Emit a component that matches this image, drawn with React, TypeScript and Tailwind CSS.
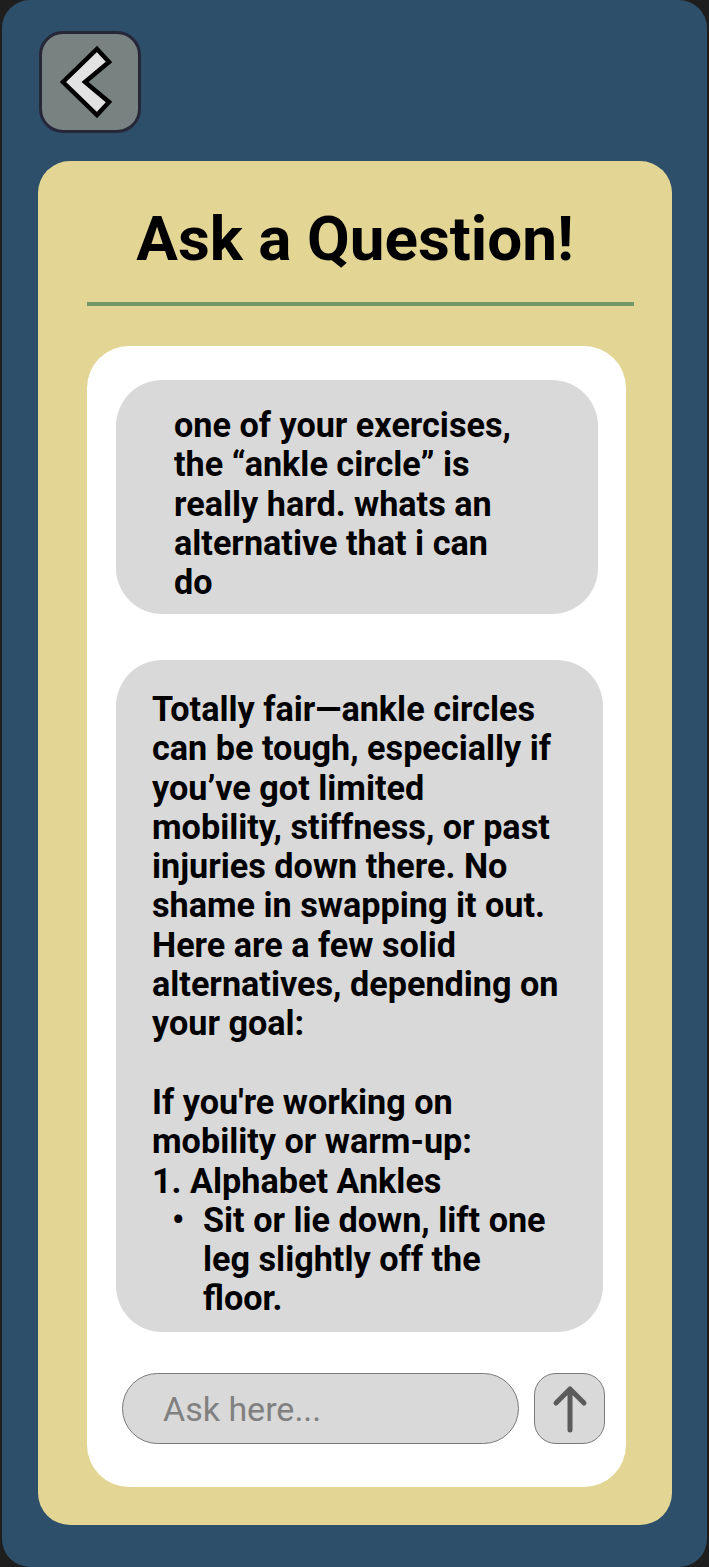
import React from 'react'

const font = { fontFamily: 'Roboto, "Liberation Sans", sans-serif' }

const BackChevron: React.FC = () => (
  <svg width="96" height="96" viewBox="0 0 96 96">
    <polygon
      points="55,15 67,28 43,48 67,68 55,81 21,48"
      fill="#e2e2e2"
      stroke="#000"
      strokeWidth="4.5"
      strokeLinejoin="miter"
    />
  </svg>
)

const UpArrow: React.FC = () => (
  <svg width="40" height="52" viewBox="0 0 40 52">
    <path d="M20 6 V47 M6 20 L20 6 L34 20" fill="none" stroke="#5b5b5b" strokeWidth="5" strokeLinecap="round" strokeLinejoin="round" />
  </svg>
)

const App: React.FC = () => {
  return (
    <div className="min-h-screen bg-[#1e1e1e] px-[2px]" style={font}>
      <div className="w-[705px] h-[1567px] rounded-[28px] bg-[#2d4f69] flex flex-col pt-[31px] pl-[36px]">
        {/* back button */}
        <button className="w-[102px] h-[102px] ml-[1px] rounded-[24px] border-[3px] border-[#27273a] bg-[#788381] flex items-center justify-center">
          <BackChevron />
        </button>

        {/* card */}
        <div className="mt-[28px] w-[634px] h-[1364px] rounded-[32px] bg-[#e3d694] flex flex-col pt-[42px]">
          <h1 className="text-center text-[62px] leading-[72px] font-bold text-black">Ask a Question!</h1>
          <div className="mt-[27px] ml-[49px] mr-[38px] h-[4px] bg-[#729866]" />

          {/* chat panel */}
          <div className="mt-[40px] ml-[49px] w-[539px] h-[1141px] rounded-[42px] bg-white flex flex-col pt-[34px]">
            <div className="ml-[29px] w-[482px] h-[234px] rounded-[46px] bg-[#d9d9d9] pt-[26px] pl-[58px]">
              <p className="w-[350px] text-[34.2px] leading-[39.3px] font-bold text-black">
                one of your exercises, the “ankle circle” is really hard. whats an alternative that i can do
              </p>
            </div>

            <div className="mt-[46px] ml-[29px] w-[487px] h-[672px] rounded-[46px] bg-[#d9d9d9] pt-[30px] pl-[36px] overflow-hidden">
              <div className="w-[408px] text-[34.2px] leading-[39.3px] font-bold text-black">
                <p>
                  Totally fair—ankle circles can be tough, especially if you’ve got limited mobility, stiffness, or past
                  injuries down there. No shame in swapping it out. Here are a few solid alternatives, depending on your goal:
                </p>
                <p className="mt-[39.3px]">If you're working on mobility or warm-up:</p>
                <p>1. Alphabet Ankles</p>
                <div className="flex">
                  <span className="w-[51px] shrink-0 pl-[20px]">•</span>
                  <span className="w-[350px]">Sit or lie down, lift one leg slightly off the floor.</span>
                </div>
              </div>
            </div>

            <div className="mt-[41px] ml-[35px] flex gap-[15px]">
              <input
                className="w-[397px] h-[71px] rounded-full border-[1.5px] border-[#7a7a7a] bg-[#d9d9d9] pl-[40px] text-[34px] text-black placeholder:text-[#808080] outline-none"
                placeholder="Ask here..."
                style={font}
              />
              <button className="w-[71px] h-[71px] rounded-[22px] border-[1.5px] border-[#7a7a7a] bg-[#d9d9d9] flex items-center justify-center">
                <UpArrow />
              </button>
            </div>
          </div>
        </div>
      </div>
    </div>
  )
}

export default App
